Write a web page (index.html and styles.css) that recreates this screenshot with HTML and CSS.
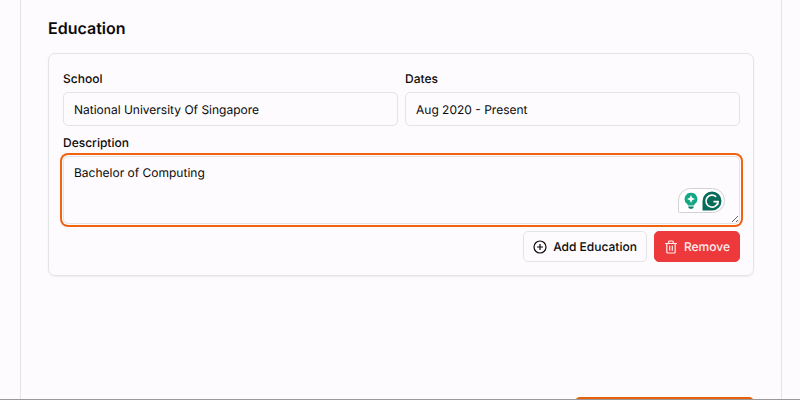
FILE: index.html
```html
<!DOCTYPE html>
<html lang="en">
<head>
    <meta charset="UTF-8">
    <meta name="viewport" content="width=device-width, initial-scale=1.0">
    <title>Education</title>
    <link rel="stylesheet" href="styles.css">
</head>
<body>
    <main class="panel">
        <h2>Education</h2>

        <form class="card">
            <div class="row">
                <div class="field">
                    <label for="school">School</label>
                    <input type="text" id="school" value="National University Of Singapore">
                </div>
                <div class="field">
                    <label for="dates">Dates</label>
                    <input type="text" id="dates" value="Aug 2020 - Present">
                </div>
            </div>

            <div class="field">
                <label for="description">Description</label>
                <div class="editor">
                    <textarea id="description" spellcheck="false">Bachelor of Computing</textarea>
                    <!-- writing assistant -->
                    <div class="assistant">
                        <svg width="14" height="18" viewBox="0 0 14 18">
                            <path d="M7 .8a6.3 6.3 0 0 0-3.9 11.3c.6.4.9.9.9 1.5h6c0-.6.3-1.1.9-1.5A6.3 6.3 0 0 0 7 .8z" fill="#15a683"/>
                            <path d="M7 3l1.2 2.8L11 7 8.2 8.2 7 11 5.8 8.2 3 7l2.8-1.2z" fill="#fff"/>
                            <path d="M4.2 14.5h5.6c0 1.5-1.2 2.3-2.8 2.3s-2.8-.8-2.8-2.3z" fill="#0b7f68"/>
                        </svg>
                        <svg width="20" height="20" viewBox="0 0 20 20">
                            <path d="M10 .5A9.5 9.5 0 0 0 .5 10v9.5H10A9.5 9.5 0 0 0 10 .5z" fill="#066b59"/>
                            <path d="M14.2 5.8A6 6 0 1 0 16 10.6h-4.6" fill="none" stroke="#fff" stroke-width="1.7"/>
                            <path d="M15.8 10v4" fill="none" stroke="#fff" stroke-width="1.3"/>
                        </svg>
                    </div>
                    <svg class="grip" width="8" height="8" viewBox="0 0 8 8">
                        <path d="M1 7l6-6M5 7l2-2" fill="none" stroke="#666" stroke-width="1"/>
                    </svg>
                </div>
            </div>

            <div class="actions">
                <button type="button" class="btn">
                    <svg width="14" height="14" viewBox="0 0 14 14" fill="none" stroke="currentColor" stroke-width="1.2">
                        <circle cx="7" cy="7" r="6"/>
                        <path d="M7 4v6M4 7h6"/>
                    </svg>
                    Add Education
                </button>
                <button type="button" class="btn btn-remove">
                    <svg width="14" height="14" viewBox="0 0 14 14" fill="none" stroke="currentColor" stroke-width="1.2" stroke-linecap="round" stroke-linejoin="round">
                        <path d="M1.5 3.5h11M4.7 3.3V2q0-1 1-1h2.6q1 0 1 1v1.3M2.8 3.5V12q0 1 1 1h6.4q1 0 1-1V3.5M5.7 6.2v4M8.3 6.2v4"/>
                    </svg>
                    Remove
                </button>
            </div>
        </form>

        <button type="button" class="submit" aria-label="Submit"></button>
    </main>
</body>
</html>
```

FILE: styles.css
```css
* {
    box-sizing: border-box;
}
body {
    margin: 0;
    height: 100vh;
    overflow: hidden;
    border-bottom: 1px solid #999;
    background-color: #fdfbfe;
    color: #0c0a09;
    font-family: Inter, "Liberation Sans", sans-serif;
    font-size: 12px;
    line-height: 16px;
    text-rendering: geometricPrecision;
}
.panel {
    display: flex;
    flex-direction: column;
    margin: 0 18px 0 20px;
    padding: 16px 27px 0;
    border: solid #e4e3e6;
    border-width: 0 1px;
}
h2 {
    margin: 0 0 13px;
    font-size: 16px;
    font-weight: 600;
    line-height: 24px;
}
.card {
    display: flex;
    flex-direction: column;
    gap: 7px;
    padding: 17px 13px 13px 14px;
    border: 1px solid #e4e3e6;
    border-radius: 7px;
    box-shadow: 0 1px 2px rgba(0,0,0,0.06);
}
.row {
    display: grid;
    grid-template-columns: 1fr 1fr;
    gap: 7px;
    margin-bottom: 2px;
}
.field {
    display: flex;
    flex-direction: column;
    gap: 5px;
}
label {
    font-weight: 500;
}
input,
textarea {
    display: block;
    width: 100%;
    height: 34px;
    padding: 0 10px;
    border: 1px solid #e4e3e6;
    border-radius: 5px;
    outline: none;
    background-color: #fdfbfe;
    color: inherit;
    font: inherit;
    text-rendering: inherit;
}
textarea {
    height: 68px;
    padding: 8px 10px;
    resize: none;
    box-shadow: 0 0 0 1px #fdfbfe, 0 0 0 3px #f06311;
}
.editor {
    position: relative;
}
.assistant {
    position: absolute;
    right: 15px;
    bottom: 11px;
    display: flex;
    align-items: center;
    gap: 4px;
    height: 25px;
    padding: 0 2px 0 5px;
    border: 1px solid #d2d1d4;
    border-radius: 13px 13px 13px 2px;
    background-color: #fff;
}
.grip {
    position: absolute;
    right: 1px;
    bottom: 1px;
}
.actions {
    display: flex;
    justify-content: flex-end;
    gap: 7px;
}
.btn {
    display: flex;
    align-items: center;
    gap: 6px;
    height: 31px;
    padding: 0 9px;
    border: 1px solid #e4e3e6;
    border-radius: 5px;
    background-color: #fdfbfe;
    color: inherit;
    font: inherit;
    font-weight: 500;
    text-rendering: inherit;
    cursor: pointer;
}
.btn-remove {
    border-color: #ed393c;
    background-color: #ed393c;
    color: #fdeeee;
}
.submit {
    align-self: flex-end;
    width: 179px;
    height: 31px;
    margin-top: 121px;
    border: none;
    border-radius: 5px;
    background-color: #ea5f0c;
}
```
